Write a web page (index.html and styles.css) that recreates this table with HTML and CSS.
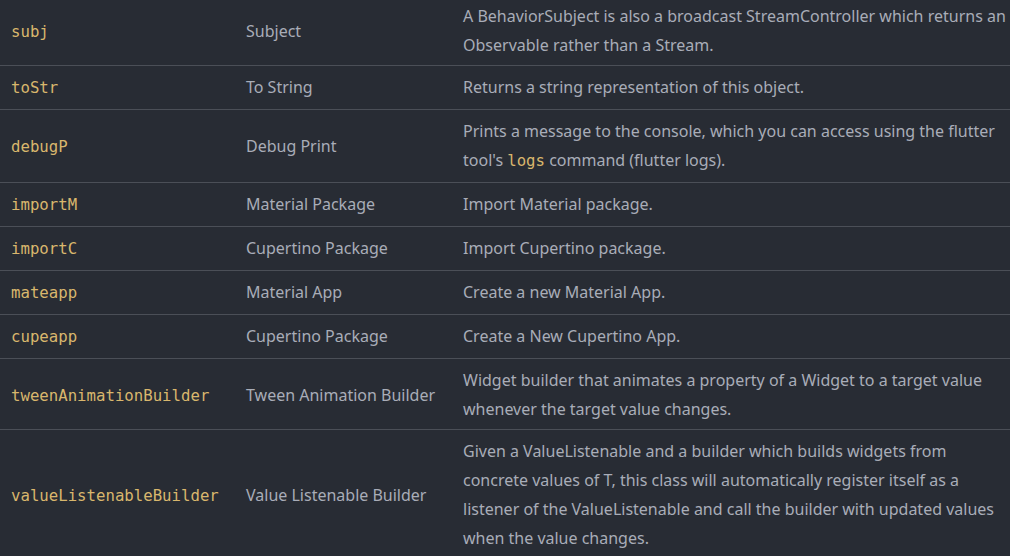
FILE: index.html
```html
<!DOCTYPE html>
<html>
<head>
<meta charset="utf-8">
<link rel="stylesheet" href="styles.css">
</head>
<body>
<table class="snippets">
  <colgroup>
    <col class="c-prefix">
    <col class="c-name">
    <col class="c-desc">
  </colgroup>
  <tbody>
    <tr class="tight">
      <td><code>subj</code></td>
      <td>Subject</td>
      <td>A BehaviorSubject is also a broadcast StreamController which returns an<br>Observable rather than a Stream.</td>
    </tr>
    <tr>
      <td><code>toStr</code></td>
      <td>To String</td>
      <td>Returns a string representation of this object.</td>
    </tr>
    <tr>
      <td><code>debugP</code></td>
      <td>Debug Print</td>
      <td>Prints a message to the console, which you can access using the flutter<br>tool's <code class="inline">logs</code> command (flutter logs).</td>
    </tr>
    <tr>
      <td><code>importM</code></td>
      <td>Material Package</td>
      <td>Import Material package.</td>
    </tr>
    <tr>
      <td><code>importC</code></td>
      <td>Cupertino Package</td>
      <td>Import Cupertino package.</td>
    </tr>
    <tr>
      <td><code>mateapp</code></td>
      <td>Material App</td>
      <td>Create a new Material App.</td>
    </tr>
    <tr>
      <td><code>cupeapp</code></td>
      <td>Cupertino Package</td>
      <td>Create a New Cupertino App.</td>
    </tr>
    <tr class="tight">
      <td><code>tweenAnimationBuilder</code></td>
      <td>Tween Animation Builder</td>
      <td>Widget builder that animates a property of a Widget to a target value<br>whenever the target value changes.</td>
    </tr>
    <tr>
      <td><code>valueListenableBuilder</code></td>
      <td>Value Listenable Builder</td>
      <td>Given a ValueListenable and a builder which builds widgets from<br>concrete values of T, this class will automatically register itself as a<br>listener of the ValueListenable and call the builder with updated values<br>when the value changes.</td>
    </tr>
  </tbody>
</table>
</body>
</html>
```
FILE: styles.css
```css
html, body {
  margin: 0;
  padding: 0;
  background: #282c34;
  overflow: hidden;
}

.snippets {
  border-collapse: collapse;
  table-layout: fixed;
  width: 1060px;
  margin-top: -5px;
  font-family: "Noto Sans", "Open Sans", sans-serif;
  font-size: 16px;
  line-height: 29px;
  color: #a9adb8;
}

.c-prefix { width: 235px; }
.c-name { width: 217px; }
.c-desc { width: 608px; }

.snippets td {
  padding: 7px 11px;
  vertical-align: middle;
  border-bottom: 1px solid #4b4f57;
  white-space: nowrap;
}

.snippets .tight td {
  padding-bottom: 5px;
}

.snippets code {
  font-family: "DejaVu Sans Mono", "Liberation Mono", monospace;
  font-size: 15.7px;
  line-height: 1;
  color: #d9b76d;
}
```
